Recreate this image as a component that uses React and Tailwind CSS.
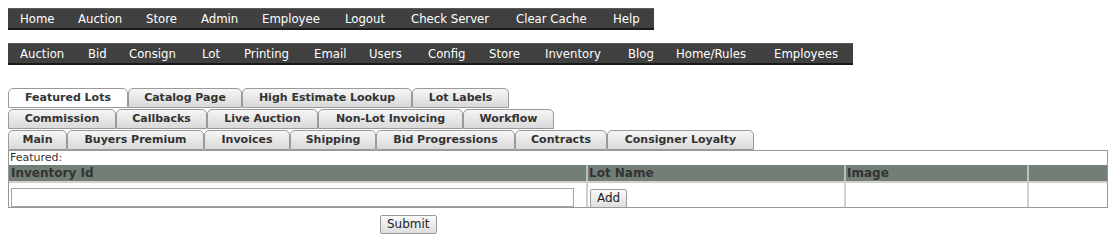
import React from 'react';

const topNav = [
  ['Home', 58], ['Auction', 68], ['Store', 55], ['Admin', 61], ['Employee', 83],
  ['Logout', 66], ['Check Server', 105], ['Clear Cache', 97], ['Help', 52],
];

const adminNav = [
  ['Auction', 68], ['Bid', 41], ['Consign', 73], ['Lot', 42], ['Printing', 70],
  ['Email', 55], ['Users', 59], ['Config', 61], ['Store', 56], ['Inventory', 83],
  ['Blog', 48], ['Home/Rules', 98], ['Employees', 90],
];

const tabRows = [
  [['Featured Lots', 120, true], ['Catalog Page', 114], ['High Estimate Lookup', 170], ['Lot Labels', 97]],
  [['Commission', 108], ['Callbacks', 91], ['Live Auction', 111], ['Non-Lot Invoicing', 145], ['Workflow', 91]],
  [['Main', 59], ['Buyers Premium', 137], ['Invoices', 86], ['Shipping', 86], ['Bid Progressions', 139], ['Contracts', 92], ['Consigner Loyalty', 147]],
];

function NavBar({ items }) {
  return (
    <div className="flex h-[22px] w-fit items-center border-b-2 border-t border-b-[#1a1a1a] border-t-[#5a5a5a] bg-[#404040] pl-px text-[13px] text-white [font-family:'DejaVu_Sans_Condensed','Liberation_Sans',sans-serif]">
      {items.map(([label, w]) => (
        <span key={label} className="whitespace-nowrap pl-[11px]" style={{ width: w }}>
          {label}
        </span>
      ))}
    </div>
  );
}

function Tab({ label, width, active }) {
  return (
    <div
      className={`flex h-[20px] items-center justify-center rounded-t-[5px] border border-[#9a9a9a] text-[11px] font-bold text-[#333] ${
        active ? 'bg-white' : 'bg-gradient-to-b from-[#f6f6f6] to-[#d9d9d9]'
      }`}
      style={{ width }}
    >
      {label}
    </div>
  );
}

function Button({ children }) {
  return (
    <button className="h-[19px] rounded-[2px] border border-[#9a9a9a] bg-gradient-to-b from-[#fafafa] to-[#dedede] px-[6px] text-[12px] leading-none text-[#222]">
      {children}
    </button>
  );
}

export default function App() {
  return (
    <div className="h-[248px] w-[1120px] bg-white p-2 [font-family:'DejaVu_Sans',Verdana,sans-serif]">
      <NavBar items={topNav} />
      <div className="mt-[13px]">
        <NavBar items={adminNav} />
      </div>

      {/* tab rows */}
      <div className="mt-[23px] flex flex-col gap-px">
        {tabRows.map((row, i) => (
          <div key={i} className="flex">
            {row.map(([label, w, active]) => (
              <Tab key={label} label={label} width={w} active={active} />
            ))}
          </div>
        ))}
      </div>

      {/* panel */}
      <div className="w-[1100px] border border-[#999]">
        <div className="pl-px text-[11px] leading-[14px] text-[#333]">Featured:</div>
        <div className="grid grid-cols-[579px_258px_183px_1fr]">
          <div className="h-[16px] border-r-2 border-[#bdbdbd] bg-[#737f75] pl-[2px] text-[12px] font-bold leading-[16px] text-[#333]">Inventory Id</div>
          <div className="h-[16px] border-r-2 border-[#bdbdbd] bg-[#737f75] pl-px text-[12px] font-bold leading-[16px] text-[#333]">Lot Name</div>
          <div className="h-[16px] border-r-2 border-[#bdbdbd] bg-[#737f75] pl-px text-[12px] font-bold leading-[16px] text-[#333]">Image</div>
          <div className="h-[16px] bg-[#737f75]" />
          <div className="h-[26px] border-r-2 border-t-2 border-[#cfcfcf] pl-[2px] pt-[2px]">
            <input className="h-[19px] w-[563px] border border-[#a5a5a5] bg-white outline-none" />
          </div>
          <div className="h-[26px] border-r-2 border-t-2 border-[#cfcfcf] pl-[2px] pt-[2px]">
            <Button>Add</Button>
          </div>
          <div className="h-[26px] border-r-2 border-t-2 border-[#cfcfcf]" />
          <div className="h-[26px] border-t-2 border-[#cfcfcf]" />
        </div>
      </div>

      <div className="mt-[3px] pl-[372px]">
        <Button>Submit</Button>
      </div>
    </div>
  );
}
